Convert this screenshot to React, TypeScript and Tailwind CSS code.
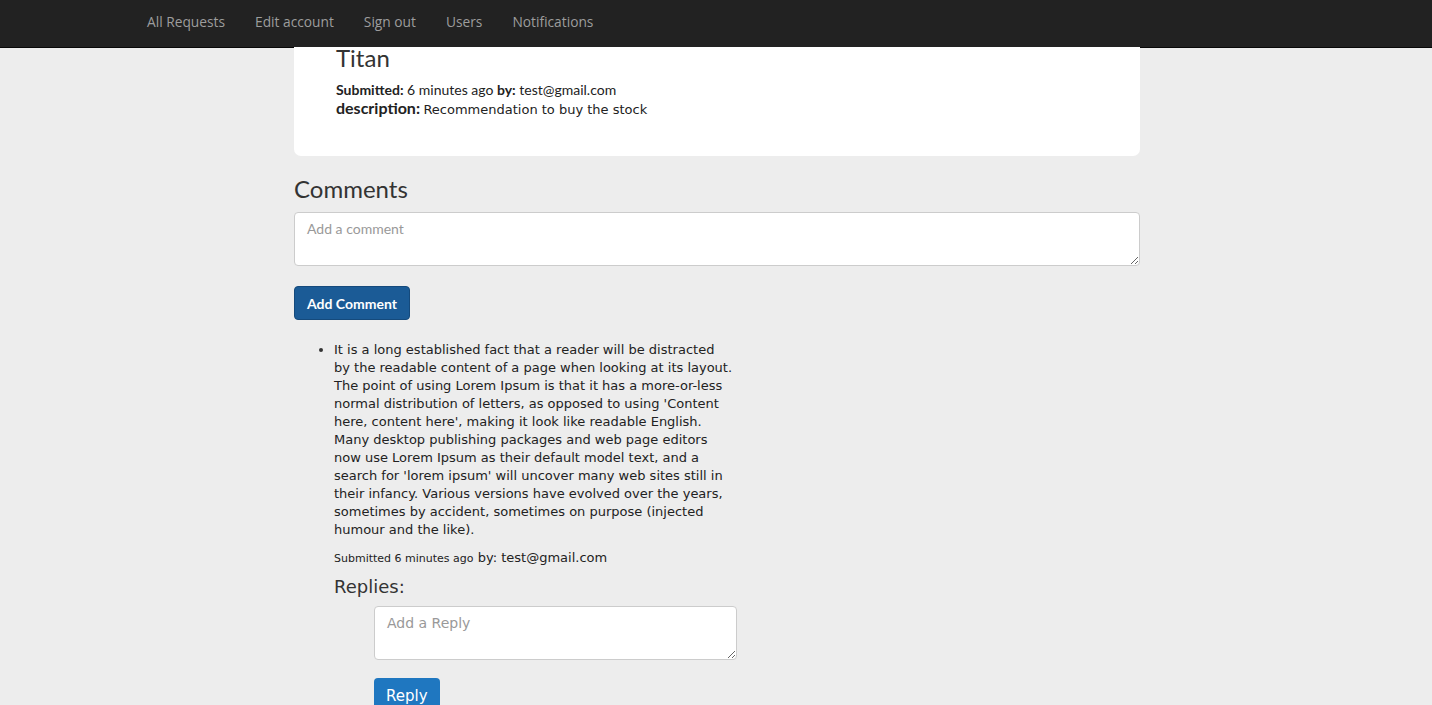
import React from 'react';

const lato = { fontFamily: 'Lato, "Liberation Sans", sans-serif' };
const verdana = { fontFamily: '"DejaVu Sans", Verdana, sans-serif' };

const navItems = ['All Requests', 'Edit account', 'Sign out', 'Users', 'Notifications'];

const commentLines = [
  'It is a long established fact that a reader will be distracted',
  'by the readable content of a page when looking at its layout.',
  'The point of using Lorem Ipsum is that it has a more-or-less',
  "normal distribution of letters, as opposed to using 'Content",
  "here, content here', making it look like readable English.",
  'Many desktop publishing packages and web page editors',
  'now use Lorem Ipsum as their default model text, and a',
  "search for 'lorem ipsum' will uncover many web sites still in",
  'their infancy. Various versions have evolved over the years,',
  'sometimes by accident, sometimes on purpose (injected',
  'humour and the like).',
];

const App: React.FC = () => {
  return (
    <div className="min-h-screen bg-[#ededed] text-[#333] overflow-hidden h-[705px]">
      <nav
        className="h-[48px] bg-[#222] border-b border-[#080808] flex items-start pt-[12px] pl-[132px]"
        style={{ fontFamily: '"Open Sans", Lato, sans-serif' }}
      >
        {navItems.map((item) => (
          <a key={item} className="px-[15px] text-[13.75px] text-[#9d9d9d] leading-[20px]">
            {item}
          </a>
        ))}
      </nav>

      <div className="w-[846px] ml-[294px]">
        <div className="bg-white rounded-b-[7px] pl-[42px] pb-[37px]">
          <h1 className="text-[24px] leading-[22px] -mt-[1px]" style={lato}>Titan</h1>
          <div className="mt-[11px] text-[14px] leading-[19px] text-[#222]" style={lato}>
            <span className="font-bold">Submitted:</span> 6 minutes ago <span className="font-bold">by:</span> test@gmail.com
          </div>
          <div className="text-[13px] leading-[18px] text-[#222]">
            <span className="font-bold text-[16px]" style={lato}>description:</span>{' '}
            <span style={verdana}>Recommendation to buy the stock</span>
          </div>
        </div>

        <h2 className="text-[24px] leading-[26px] mt-[20px] mb-[10px]" style={lato}>Comments</h2>
        <textarea
          placeholder="Add a comment"
          className="block w-full h-[54px] bg-white border border-[#ccc] rounded-[4px] px-[12px] py-[6px] text-[14px] leading-[20px] placeholder:text-[#999] outline-none"
          style={lato}
        />
        <button
          className="mt-[20px] h-[34px] px-[12px] bg-[#1b5b96] border border-[#154a7c] rounded-[4px] text-white text-[14px] font-bold"
          style={lato}
        >
          Add Comment
        </button>

        <ul className="list-disc pl-[40px] mt-[21px] w-[446px] text-[13px] leading-[18px] text-[#222]" style={verdana}>
          <li className="marker:text-[#333]">
            <p>
              {commentLines.map((line, i) => (
                <React.Fragment key={i}>
                  {line}
                  {i < commentLines.length - 1 && <br />}
                </React.Fragment>
              ))}
            </p>
            <div className="mt-[10px] leading-[18px]">
              <span className="text-[11px]">Submitted 6 minutes ago</span>{' '}
              <span className="text-[13px]">by: test@gmail.com</span>
            </div>
            <h3 className="text-[18px] leading-[20px] mt-[9px] mb-[9px] text-[#333]">Replies:</h3>
            <div className="pl-[40px]">
              <textarea
                placeholder="Add a Reply"
                className="block w-[363px] h-[54px] bg-white border border-[#ccc] rounded-[4px] px-[12px] py-[6px] text-[14px] leading-[20px] placeholder:text-[#999] outline-none"
                style={verdana}
              />
              <button
                className="mt-[18px] h-[36px] px-[12px] bg-[#1f77c0] rounded-[4px] text-white text-[15px]"
                style={verdana}
              >
                Reply
              </button>
            </div>
          </li>
        </ul>
      </div>
    </div>
  );
};

export default App;
